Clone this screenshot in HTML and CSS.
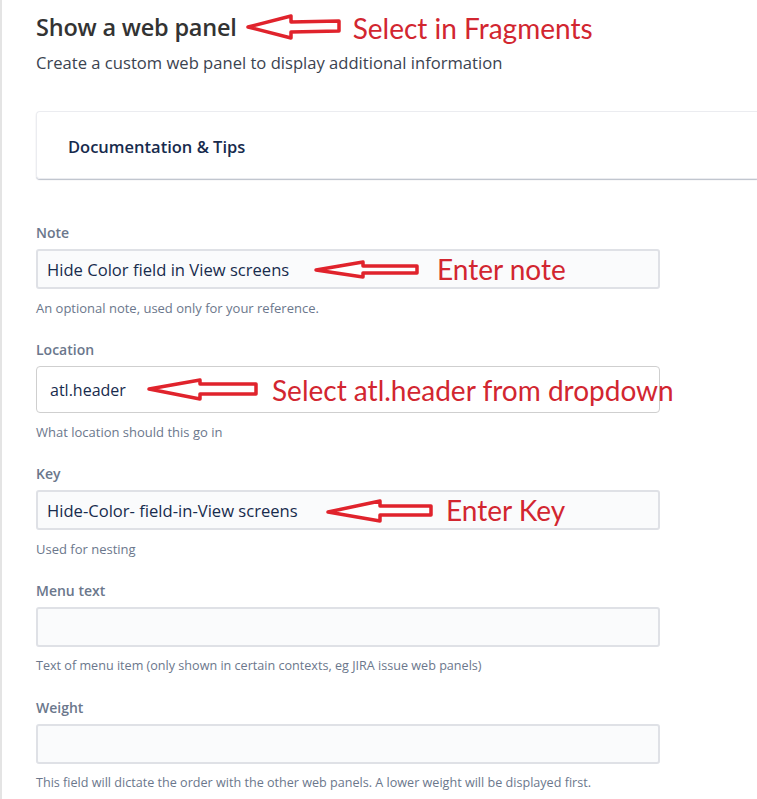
FILE: index.html
```html
<!DOCTYPE html>
<html lang="en">
<head>
    <meta charset="UTF-8">
    <meta name="viewport" content="width=device-width, initial-scale=1.0">
    <title>Show a web panel</title>
    <link rel="stylesheet" href="styles.css">
</head>
<body>
<div class="page">
    <div class="header">
        <h1 class="title">Show a web panel</h1>
        <svg class="arrow arrow-title" width="98" height="28" viewBox="0 0 98 28">
            <polygon points="3,14 46,3 46,9 94,8 94,18 46,19 46,25"/>
        </svg>
        <span class="callout-text callout-title">Select in Fragments</span>
    </div>
    <p class="desc">Create a custom web panel to display additional information</p>

    <div class="card">
        <h3 class="card-title">Documentation &amp; Tips</h3>
    </div>

    <div class="field">
        <label class="label">Note</label>
        <div class="control">
            <input class="input" type="text" value="Hide Color field in View screens">
            <div class="callout callout-note">
                <svg class="arrow" width="107" height="20" viewBox="0 0 107 20">
                    <polygon points="3,11 50,3 50,7 104,7 104,14 50,14 50,18"/>
                </svg>
                <span class="callout-text">Enter note</span>
            </div>
        </div>
        <div class="help">An optional note, used only for your reference.</div>
    </div>

    <div class="field">
        <label class="label">Location</label>
        <div class="control">
            <div class="select">atl.header</div>
            <div class="callout callout-location">
                <svg class="arrow" width="114" height="25" viewBox="0 0 114 25">
                    <polygon points="3,12 54,3 54,7 110,7 110,17 54,17 54,22"/>
                </svg>
                <span class="callout-text">Select atl.header from dropdown</span>
            </div>
        </div>
        <div class="help">What location should this go in</div>
    </div>

    <div class="field">
        <label class="label">Key</label>
        <div class="control">
            <input class="input" type="text" value="Hide-Color- field-in-View screens">
            <div class="callout callout-key">
                <svg class="arrow" width="110" height="25" viewBox="0 0 110 25">
                    <polygon points="3,14 55,3 55,8 106,8 106,17 55,17 55,23"/>
                </svg>
                <span class="callout-text">Enter Key</span>
            </div>
        </div>
        <div class="help">Used for nesting</div>
    </div>

    <div class="field">
        <label class="label">Menu text</label>
        <div class="control">
            <input class="input" type="text" value="">
        </div>
        <div class="help help-narrow">Text of menu item (only shown in certain contexts, eg JIRA issue web panels)</div>
    </div>

    <div class="field">
        <label class="label">Weight</label>
        <div class="control">
            <input class="input" type="text" value="">
        </div>
        <div class="help help-narrow">This field will dictate the order with the other web panels. A lower weight will be displayed first.</div>
    </div>
</div>
</body>
</html>
```

FILE: styles.css
```css
html, body {
    margin: 0;
    padding: 0;
    background: #fff;
}
body {
    font-family: 'Open Sans', 'Noto Sans', sans-serif;
    color: #172b4d;
    overflow: hidden;
}
.page {
    border-left: 2px solid #e4e4e4;
    min-height: 799px;
    padding: 10px 0 0 34px;
    box-sizing: border-box;
}
.header {
    display: flex;
    align-items: center;
    height: 34px;
}
.title {
    margin: 0;
    font-size: 23.5px;
    font-weight: 600;
    color: #333;
    letter-spacing: -0.2px;
}
.arrow-title {
    margin-left: 8px;
}
.callout-title {
    margin-left: 10px;
    padding-top: 2px;
}
.desc {
    margin: 8px 0 0;
    font-size: 16.6px;
    line-height: 22px;
    color: #3b4350;
}
.card {
    margin-top: 37px;
    height: 68px;
    border: 1px solid #ebecf0;
    border-right: none;
    border-radius: 4px 0 0 4px;
    box-shadow: 0 1px 1px rgba(9, 30, 66, 0.28);
    display: flex;
    align-items: center;
    padding: 3px 0 0 31px;
    box-sizing: border-box;
}
.card-title {
    margin: 0;
    font-size: 16.5px;
    font-weight: 600;
    color: #172b4d;
}
.field {
    margin-top: 24px;
    width: 624px;
}
.card + .field {
    margin-top: 44px;
}
.label {
    display: block;
    font-size: 14px;
    font-weight: 600;
    line-height: 20px;
    color: #6b778c;
}
.control {
    position: relative;
    margin-top: 6px;
}
.input {
    display: block;
    width: 100%;
    height: 40px;
    box-sizing: border-box;
    margin: 0;
    padding: 0 9px;
    border: 2px solid #dfe1e6;
    border-radius: 3px;
    background: #fafbfc;
    font-family: inherit;
    font-size: 16.6px;
    color: #172b4d;
    outline: none;
}
.select {
    height: 47px;
    box-sizing: border-box;
    padding-left: 13px;
    border: 1px solid #cfcfcf;
    border-radius: 4px;
    background: #fff;
    display: flex;
    align-items: center;
    font-size: 16px;
    color: #172b4d;
}
.help {
    margin-top: 11px;
    font-size: 13px;
    line-height: 16px;
    color: #6b778c;
    white-space: nowrap;
}
.help-narrow {
    font-size: 12.6px;
}
.callout {
    position: absolute;
    top: 0;
    bottom: 0;
    display: flex;
    align-items: center;
    pointer-events: none;
}
.callout-note { left: 277px; }
.callout-location { left: 110px; }
.callout-key { left: 289px; }
.callout-note .callout-text { margin-left: 17px; }
.callout-location .callout-text { margin-left: 12px; }
.callout-key .callout-text { margin-left: 11px; }
.arrow {
    display: block;
    flex: none;
}
.arrow polygon {
    fill: #fff;
    stroke: #e0232c;
    stroke-width: 3.5;
    stroke-linejoin: round;
}
.callout-text {
    font-family: Lato, 'Open Sans', sans-serif;
    font-size: 28px;
    color: #d22630;
    white-space: nowrap;
    line-height: 1;
}
```
